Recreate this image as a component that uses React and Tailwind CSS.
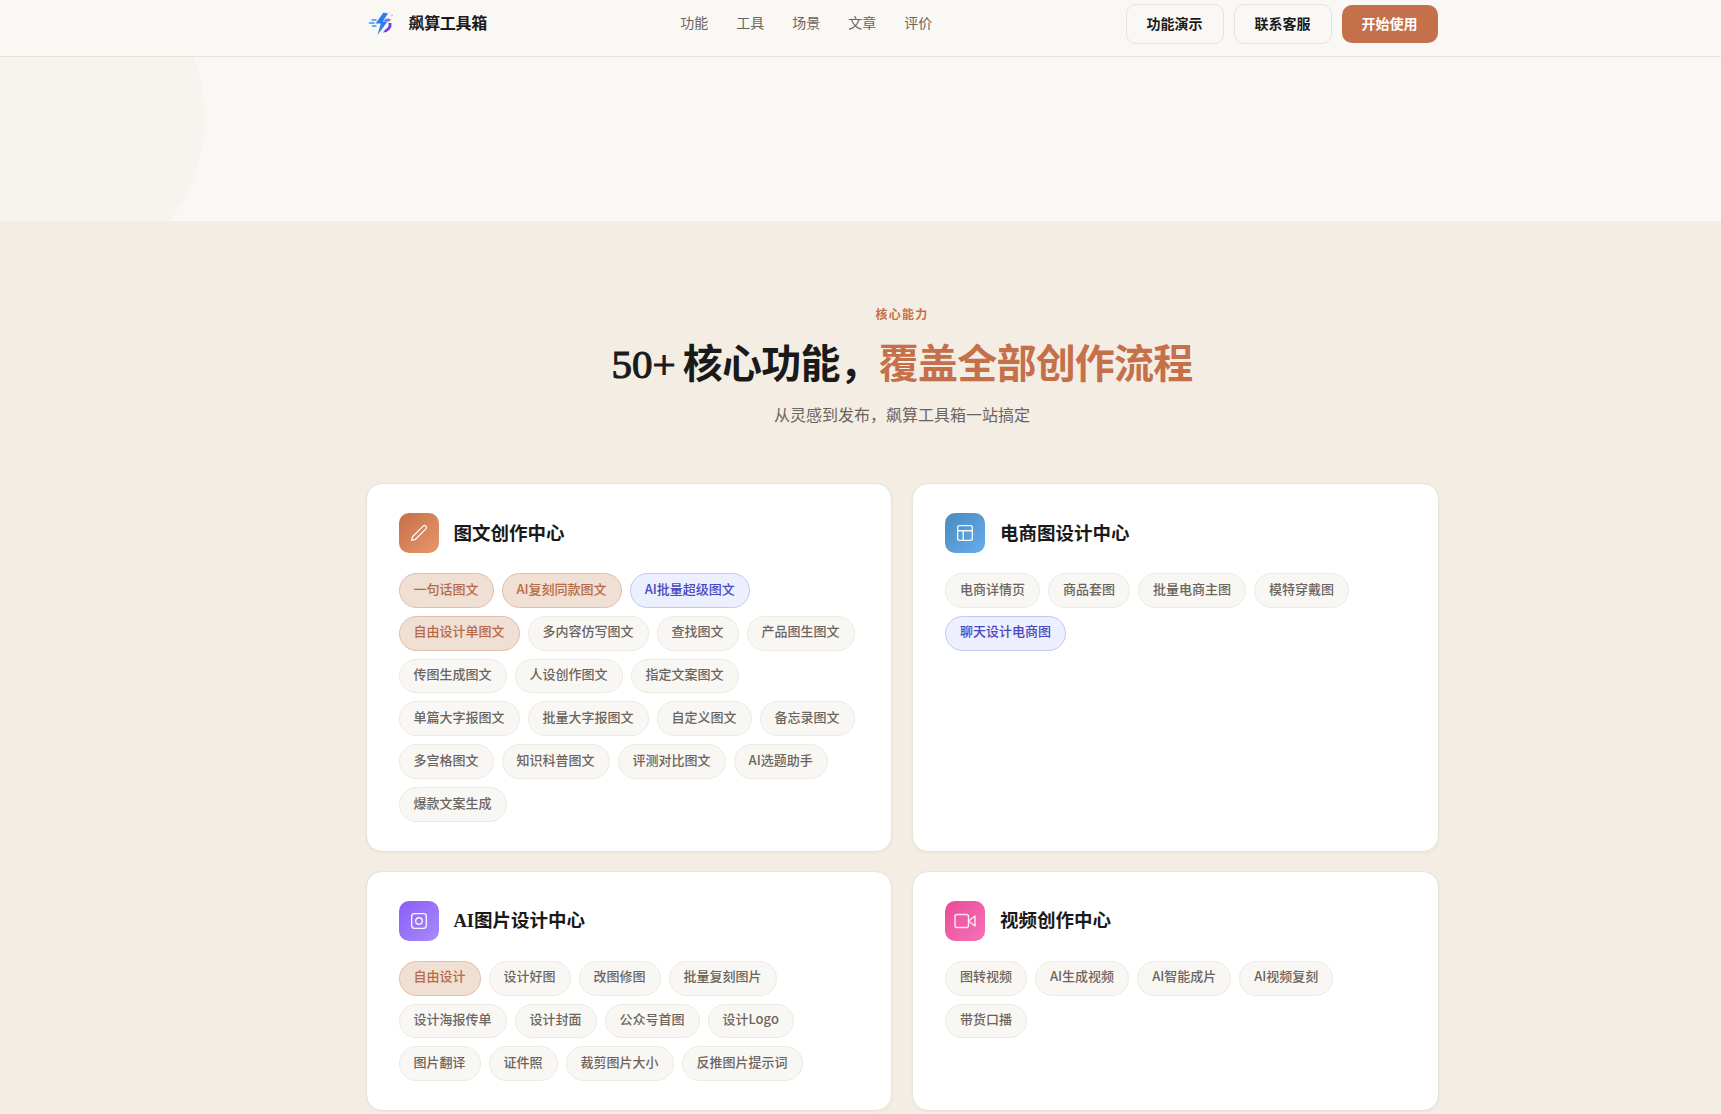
import React from "react";

const SANS = "font-['Noto_Sans_CJK_SC',sans-serif]";
const Pill = ({ t, v }) => {
  const cls =
    v === "o"
      ? "bg-[#f0dfd3] border-[#dfbfac] text-[#b76a48]"
      : v === "b"
      ? "bg-[#eceffd] border-[#c4c8f0] text-[#4b47bd]"
      : "bg-[#f9f7f3] border-[#eee9e1] text-[#6b6560]";
  return (
    <span className={`inline-flex h-[34.8px] items-center rounded-full border px-[14px] pb-[4px] text-[13px] font-medium ${cls}`}>
      {t}
    </span>
  );
};

const Card = ({ title, icon, grad, items }) => (
  <div className="rounded-2xl border border-[#e9e2d8] bg-white px-8 pt-[29px] pb-[29px] shadow-[0_1px_3px_rgba(90,60,30,0.05)]">
    <div className="flex items-center gap-[15px]">
      <div className={`flex h-10 w-10 items-center justify-center rounded-[10px] ${grad}`}>{icon}</div>
      <h3 className="pt-[3px] font-['Liberation_Serif','Noto_Sans_CJK_SC',serif] text-[18.5px] font-bold text-[#1a1a1a]">{title}</h3>
    </div>
    <div className="mt-5 flex flex-wrap gap-x-2 gap-y-2">
      {items.map(([t, v]) => (
        <Pill key={t} t={t} v={v} />
      ))}
    </div>
  </div>
);

const I = ({ children }) => (
  <svg width="22" height="22" viewBox="0 0 24 24" fill="none" stroke="rgba(255,255,255,0.92)" strokeWidth="1.5" strokeLinecap="round" strokeLinejoin="round">
    {children}
  </svg>
);

const Logo = () => (
  <svg width="32" height="32" viewBox="0 0 32 32" fill="none">
    <defs>
      <linearGradient id="lg" x1="10" y1="4" x2="20" y2="28">
        <stop offset="0" stopColor="#2a7df2" />
        <stop offset="0.6" stopColor="#3f5fe8" />
        <stop offset="1" stopColor="#6a3fdc" />
      </linearGradient>
    </defs>
    <path d="M25.5 15 A8.2 8.2 0 0 1 17 24.5 L19.5 21.2 A5 5 0 0 0 22.4 15 Z" fill="#7240dc" />
    <path d="M17.5 13 A6 6 0 0 1 25 11.5 L22.5 14 A4 4 0 0 0 19 13.5 Z" fill="#8f6bea" />
    <path d="M17.5 4.5 L9.5 15.5 L14.8 15.5 L11.5 27 L21.5 13.5 L16.8 13.5 L22 5.5 Z" fill="url(#lg)" />
    <path d="M3.5 15 H8 M6 12 H10 M6.5 18 H10" stroke="#3f8cf2" strokeWidth="1.4" strokeLinecap="round" />
    <circle cx="26" cy="7.5" r="0.9" fill="#a8b8e8" />
    <circle cx="23.5" cy="4.5" r="0.6" fill="#c0cbee" />
  </svg>
);

export default function App() {
  return (
    <div className={`flex min-h-screen flex-col overflow-hidden bg-[#f4ede4] ${SANS}`}>
      <header className="relative z-10 h-[57px] border-b border-[#e8e2d9] bg-[#faf8f4]">
        <div className="ml-[365.5px] flex h-[48px] w-[1072px] items-center justify-between">
          <div className="flex items-center gap-[11px]">
            <Logo />
            <span className="pb-[4px] text-base font-bold tracking-[-0.02em] text-[#1a1a1a]">飙算工具箱</span>
          </div>
          <nav className="flex items-center gap-7 pb-[4px] text-sm text-[#6b6560]">
            <span>功能</span>
            <span>工具</span>
            <span>场景</span>
            <span>文章</span>
            <span>评价</span>
          </nav>
          <div className="flex items-center gap-[10px] text-sm font-bold">
            <button className="h-10 w-[98px] rounded-[10px] border border-[#e8e2d9] pb-[3px] text-[#1a1a1a]">功能演示</button>
            <button className="h-10 w-[98px] rounded-[10px] border border-[#e8e2d9] pb-[3px] text-[#1a1a1a]">联系客服</button>
            <button className="h-[38px] w-[96px] rounded-[10px] bg-[#c4704a] pb-[3px] text-white">开始使用</button>
          </div>
        </div>
      </header>

      <div className="relative h-[164px] overflow-hidden bg-[#faf8f4]">
        <div className="absolute left-[-131px] top-[-107px] h-[336px] w-[336px] rounded-full bg-[#f7f4ef]" />
      </div>

      <section className="flex-1 pt-[84px] pb-4">
        <div className="ml-[365.5px] w-[1073px]">
          <div className="text-center">
            <div className="text-xs font-bold leading-[18px] tracking-[0.1em] text-[#c4704a]">核心能力</div>
            <h2 className="mt-[15px] font-['Liberation_Serif','Noto_Sans_CJK_SC',serif] text-[40px] font-bold leading-[52px] tracking-[-0.02em] text-[#1a1a1a]">
              <span className="text-[41px] font-normal tracking-normal [-webkit-text-stroke:1.1px_#1a1a1a]">50+</span>{" "}
              <span className="ml-[-2px]">核心功能，</span>
              <span className="text-[#c4704a]">覆盖全部创作流程</span>
            </h2>
            <p className="mt-[11px] text-base leading-6 text-[#6b6560]">从灵感到发布，飙算工具箱一站搞定</p>
          </div>

          <div className="mt-[57px] grid grid-cols-2 gap-x-5 gap-y-[19px]">
            <Card
              title="图文创作中心"
              grad="bg-gradient-to-br from-[#c4704a] to-[#e8976a]"
              icon={
                <I>
                  <path d="M16.5 4.5a2.1 2.1 0 0 1 3 3L8 19l-4 1 1-4Z" />
                </I>
              }
              items={[
                ["一句话图文", "o"], ["AI复刻同款图文", "o"], ["AI批量超级图文", "b"],
                ["自由设计单图文", "o"], ["多内容仿写图文"], ["查找图文"], ["产品图生图文"],
                ["传图生成图文"], ["人设创作图文"], ["指定文案图文"],
                ["单篇大字报图文"], ["批量大字报图文"], ["自定义图文"], ["备忘录图文"],
                ["多宫格图文"], ["知识科普图文"], ["评测对比图文"], ["AI选题助手"],
                ["爆款文案生成"],
              ]}
            />
            <Card
              title="电商图设计中心"
              grad="bg-gradient-to-br from-[#4a8abf] to-[#66aeea]"
              icon={
                <I>
                  <rect x="4" y="4" width="16" height="16" rx="2" />
                  <path d="M4 9.5h16M10 9.5V20" />
                </I>
              }
              items={[
                ["电商详情页"], ["商品套图"], ["批量电商主图"], ["模特穿戴图"], ["聊天设计电商图", "b"],
              ]}
            />
            <Card
              title="AI图片设计中心"
              grad="bg-gradient-to-br from-[#8b5cf6] to-[#a78bfa]"
              icon={
                <I>
                  <rect x="4" y="4" width="16" height="16" rx="3" />
                  <circle cx="12" cy="12" r="3.6" />
                </I>
              }
              items={[
                ["自由设计", "o"], ["设计好图"], ["改图修图"], ["批量复刻图片"],
                ["设计海报传单"], ["设计封面"], ["公众号首图"], ["设计Logo"],
                ["图片翻译"], ["证件照"], ["裁剪图片大小"], ["反推图片提示词"],
              ]}
            />
            <Card
              title="视频创作中心"
              grad="bg-gradient-to-br from-[#ec4899] to-[#f472b6]"
              icon={
                <svg width="24" height="24" viewBox="0 0 24 24" fill="none" stroke="rgba(255,255,255,0.85)" strokeWidth="1.4" strokeLinecap="round" strokeLinejoin="round">
                  <rect x="2" y="5.5" width="13.5" height="13" rx="2" />
                  <path d="M15.5 12 22 7v10Z" />
                </svg>
              }
              items={[
                ["图转视频"], ["AI生成视频"], ["AI智能成片"], ["AI视频复刻"], ["带货口播"],
              ]}
            />
          </div>
        </div>
      </section>
    </div>
  );
}
